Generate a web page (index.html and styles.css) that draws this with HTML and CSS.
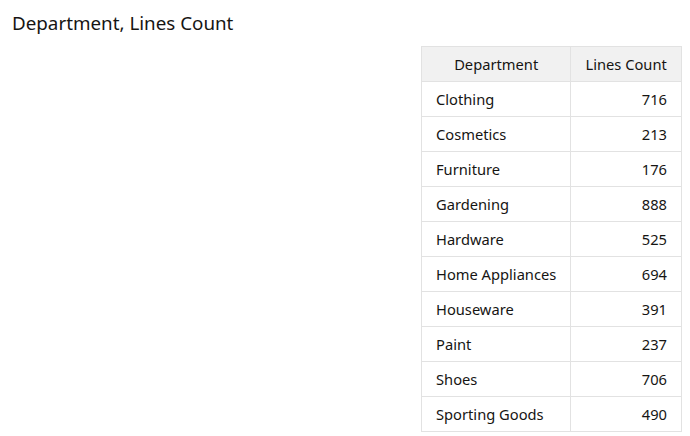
FILE: index.html
```html
<!DOCTYPE html>
<html>
<head>
<meta charset="utf-8">
<link rel="stylesheet" href="styles.css">
</head>
<body>
<div class="page">
  <h1 class="title">Department, Lines Count</h1>
  <div class="table-wrap">
    <table class="data">
      <thead>
        <tr><th class="col-dept">Department</th><th class="col-count">Lines Count</th></tr>
      </thead>
      <tbody>
        <tr><td>Clothing</td><td class="num">716</td></tr>
        <tr><td>Cosmetics</td><td class="num">213</td></tr>
        <tr><td>Furniture</td><td class="num">176</td></tr>
        <tr><td>Gardening</td><td class="num">888</td></tr>
        <tr><td>Hardware</td><td class="num">525</td></tr>
        <tr><td>Home Appliances</td><td class="num">694</td></tr>
        <tr><td>Houseware</td><td class="num">391</td></tr>
        <tr><td>Paint</td><td class="num">237</td></tr>
        <tr><td>Shoes</td><td class="num">706</td></tr>
        <tr><td>Sporting Goods</td><td class="num">490</td></tr>
      </tbody>
    </table>
  </div>
</div>
</body>
</html>
```
FILE: styles.css
```css
html, body {
  margin: 0;
  padding: 0;
  background: #ffffff;
}
body {
  font-family: "Noto Sans", "Open Sans", sans-serif;
  color: #161513;
}
.page {
  padding: 10px 8px 0 12px;
  display: flex;
  flex-direction: column;
}
.title {
  margin: 0;
  font-size: 18.8px;
  font-weight: 400;
  line-height: 26px;
  color: #161513;
}
.table-wrap {
  display: flex;
  justify-content: flex-end;
  margin-top: 10px;
}
.data {
  border-collapse: collapse;
  font-size: 14.7px;
  width: 261px;
}
.data th, .data td {
  border: 1px solid #e2e2e2;
  height: 35px;
  padding: 0 14px;
  box-sizing: border-box;
  white-space: nowrap;
}
.data th {
  background: #f1f1f1;
  font-weight: 400;
  text-align: center;
}
.col-dept { width: 149px; }
.col-count { width: 112px; }
.data td { text-align: left; }
.data td.num { text-align: right; }
```
